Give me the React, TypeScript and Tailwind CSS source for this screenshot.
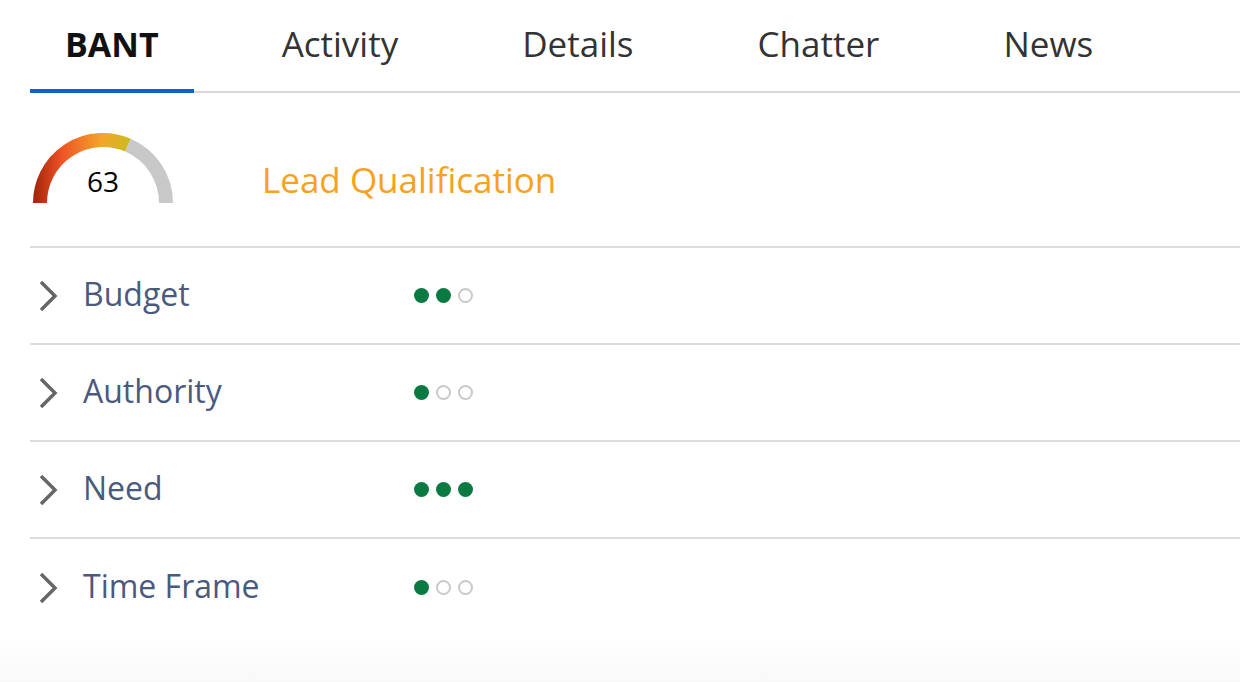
import React from "react";

const tabs = ["BANT", "Activity", "Details", "Chatter", "News"];

const rows = [
  { label: "Budget", score: 2 },
  { label: "Authority", score: 1 },
  { label: "Need", score: 3 },
  { label: "Time Frame", score: 1 },
];

function Gauge({ value }: { value: number }) {
  const cx = 73;
  const cy = 73;
  const r = 63;
  const a = Math.PI * (1 - value / 100);
  const ex = cx + r * Math.cos(a);
  const ey = cy - r * Math.sin(a);
  return (
    <div className="relative w-[146px] h-[74px]">
      <svg width="146" height="74" viewBox="0 0 146 74">
        <defs>
          <linearGradient id="g" gradientUnits="userSpaceOnUse" x1="3" y1="0" x2="104" y2="0">
            <stop offset="0" stopColor="#a0240a" />
            <stop offset="0.28" stopColor="#ee5226" />
            <stop offset="0.68" stopColor="#f4a52b" />
            <stop offset="1" stopColor="#c6bf1e" />
          </linearGradient>
        </defs>
        <path d={`M ${cx - r} ${cy} A ${r} ${r} 0 0 1 ${ex} ${ey}`} fill="none" stroke="url(#g)" strokeWidth="14" />
        <path d={`M ${ex} ${ey} A ${r} ${r} 0 0 1 ${cx + r} ${cy}`} fill="none" stroke="#c8c8c8" strokeWidth="14" />
      </svg>
      <span className="absolute left-0 right-0 top-[35px] text-center text-[28px] leading-[32px] text-black">{value}</span>
    </div>
  );
}

function Dots({ score }: { score: number }) {
  return (
    <div className="flex items-center gap-[7px]">
      {[0, 1, 2].map(i =>
        i < score ? (
          <span key={i} className="w-[15px] h-[15px] rounded-full bg-[#0b7a42]" />
        ) : (
          <span key={i} className="w-[15px] h-[15px] rounded-full border-2 border-[#c9c9c9]" />
        )
      )}
    </div>
  );
}

export default function App() {
  return (
    <div className="h-[682px] flex flex-col bg-white pl-[30px] font-['Open_Sans',sans-serif]">
      {/* Tabs */}
      <div className="flex gap-[52px] border-b-2 border-[#d8d8d8]">
        {tabs.map((t, i) => (
          <div key={t} className={`pt-[20px] leading-[48px] ${i === 0 ? "px-[35px] text-[34px] font-bold text-[#111] border-b-4 border-[#0b63ce] -mb-[2px] h-[93px]" : "px-[36px] text-[35px] h-[91px] text-[#333]"}`}>
            {t}
          </div>
        ))}
      </div>

      {/* Header */}
      <div className="flex items-end h-[155px] border-b-2 border-[#dcdcdc] pb-[42px]">
        <Gauge value={63} />
        <span className="ml-[86px] mb-[2px] text-[35px] leading-[44px] text-[#f7a11e]">Lead Qualification</span>
      </div>

      {/* BANT rows */}
      {rows.map((r, i) => (
        <div key={r.label} className={`flex items-center h-[97px] ${i < rows.length - 1 ? "border-b-2 border-[#dcdcdc]" : ""}`}>
          <svg width="30" height="34" viewBox="0 0 30 34" className="ml-[6px] text-[#666]">
            <polyline points="5,3 19,17 5,31" fill="none" stroke="currentColor" strokeWidth="3.5" />
          </svg>
          <span className="ml-[17px] w-[331px] -mt-[4px] text-[32px] leading-[40px] text-[#4a5a7e]">{r.label}</span>
          <Dots score={r.score} />
        </div>
      ))}

      <div className="flex-1 -ml-[30px] bg-gradient-to-b from-white to-[#f9f9f9]" />
    </div>
  );
}
